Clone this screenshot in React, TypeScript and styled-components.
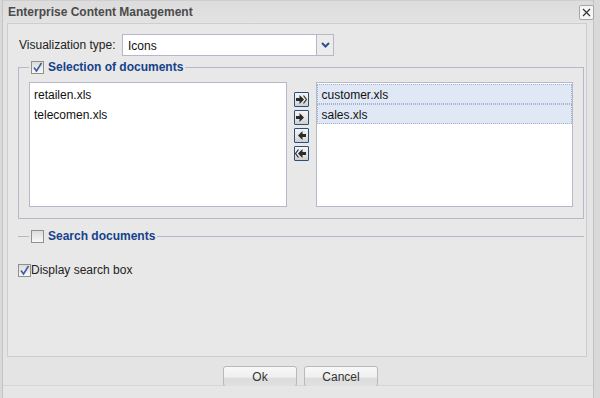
import styled, { createGlobalStyle } from "styled-components";

const GlobalStyle = createGlobalStyle`
  body {
    margin: 0;
    background: #d9d9d9;
    font-family: "Liberation Sans", Arial, sans-serif;
  }
`;

const Window = styled.div`
  width: 592px;
  height: 398px;
  margin-left: 2px;
  display: flex;
  flex-direction: column;
  background: #e4e4e4;
  border-left: 1px solid #c4c4c4;
  border-right: 1px solid #c4c4c4;
  box-sizing: border-box;
`;

const TitleBar = styled.div`
  height: 22px;
  display: flex;
  align-items: center;
  justify-content: space-between;
  padding: 0 0 0 5px;
  background: linear-gradient(#dcdcdc, #e2e2e2);
  border-top: 1px solid #cfcfcf;
  box-sizing: border-box;
`;

const Title = styled.div`
  font-size: 12px;
  font-weight: bold;
  color: #4b4b4b;
  padding-top: 1px;
`;

const CloseButton = styled.div`
  width: 13px;
  height: 13px;
  margin-top: 2px;
  margin-right: -1px;
  border: 1px solid #a6a6a6;
  border-radius: 2px;
  background: #f6f6f6;
  display: flex;
  align-items: center;
  justify-content: center;
`;

const Panel = styled.div`
  margin: 1px 6px 0 4px;
  height: 334px;
  box-sizing: border-box;
  border: 1px solid #cdcdcd;
  background: #e8e8e8;
  padding: 10px 3px 0 10px;
  display: flex;
  flex-direction: column;
`;

const FieldRow = styled.div`
  display: flex;
  align-items: center;
  margin-left: 1px;
  height: 22px;
`;

const Label = styled.div`
  font-size: 12px;
  color: #222;
  width: 103px;
  white-space: nowrap;
`;

const SelectBox = styled.div`
  display: flex;
  height: 22px;
  box-sizing: border-box;
  border: 1px solid #b5b8c8;
`;

const SelectValue = styled.div`
  width: 193px;
  background: #fff;
  font-size: 12px;
  color: #111;
  padding: 4px 0 0 5px;
  box-sizing: border-box;
`;

const SelectTrigger = styled.div`
  width: 16px;
  border-left: 1px solid #b5b8c8;
  background: #ececec;
  display: flex;
  align-items: center;
  justify-content: center;
`;

const FieldSet = styled.fieldset<{ $collapsed?: boolean }>`
  margin: 0;
  padding: ${(p) => (p.$collapsed ? "0" : "8px 10px 11px 10px")};
  border: 1px solid #b5b8c8;
  ${(p) =>
    p.$collapsed &&
    `
    border-left: none;
    border-right: none;
    border-bottom: none;
    `}
  min-width: 0;
  width: 566px;
  box-sizing: border-box;
`;

const Legend = styled.legend<{ $collapsed?: boolean }>`
  margin-left: ${(p) => (p.$collapsed ? "11px" : "0")};
  padding: 0 2px 0 2px;
  display: flex;
  align-items: center;
  gap: 4px;
  font-size: 12px;
  font-weight: bold;
  color: #15428b;
`;

const CheckBox = styled.span`
  width: 13px;
  height: 13px;
  box-sizing: border-box;
  border: 1px solid #8e8f8f;
  background: linear-gradient(#dcdcdc, #f8f8f8);
  display: inline-flex;
  align-items: center;
  justify-content: center;
  flex-shrink: 0;
`;

const ListsRow = styled.div`
  display: flex;
  align-items: flex-start;
`;

const ListBox = styled.div<{ $width: number }>`
  width: ${(p) => p.$width}px;
  height: 125px;
  box-sizing: border-box;
  background: #fff;
  border: 1px solid #b5b8c8;
  padding-top: 1px;
`;

const ListItem = styled.div<{ $selected?: boolean }>`
  height: 20px;
  box-sizing: border-box;
  font-size: 12px;
  color: #111;
  padding: 3px 0 0 3px;
  background: ${(p) => (p.$selected ? "#e0e8f6" : "transparent")};
  border: 1px dotted ${(p) => (p.$selected ? "#a3b1d1" : "transparent")};
`;

const ButtonColumn = styled.div`
  width: 16px;
  margin: 10px 7px 0 7px;
  display: flex;
  flex-direction: column;
  gap: 3px;
`;

const ArrowButton = styled.div`
  width: 15px;
  height: 15px;
  box-sizing: border-box;
  border: 1px solid #27507d;
  border-radius: 1px;
  background: linear-gradient(#f4f4f4 0%, #e6e6e6 55%, #cfcfcf 100%);
  display: flex;
  align-items: center;
  justify-content: center;
`;

const SearchSection = styled.div`
  margin-top: 10px;
`;

const CheckRow = styled.div`
  display: flex;
  align-items: center;
  margin-top: 20px;
  font-size: 12px;
  color: #222;
`;

const Footer = styled.div`
  flex: 1;
  display: flex;
  flex-direction: column;
`;

const ButtonBar = styled.div`
  height: 28px;
  display: flex;
  justify-content: center;
  align-items: flex-end;
  gap: 7px;
  padding-left: 5px;
  border-bottom: 1px solid #d6d6d6;
`;

const Button = styled.div`
  width: 74px;
  height: 21px;
  margin-bottom: -2px;
  box-sizing: border-box;
  border: 1px solid #b9b9b9;
  border-radius: 3px;
  background: linear-gradient(#f8f8f8 0%, #efefef 55%, #dcdcdc 56%, #e0e0e0 100%);
  font-size: 12px;
  color: #333;
  display: flex;
  align-items: center;
  justify-content: center;
`;

const BottomStrip = styled.div`
  flex: 1;
  background: #e6e6e6;
`;

const Check = () => (
  <svg width="11" height="11" viewBox="0 0 11 11">
    <path d="M2 5.5 L4.5 9 L9.5 1" fill="none" stroke="#3f5f9f" strokeWidth="1.6" />
  </svg>
);

const Arrow = ({ dir, double }: { dir: "right" | "left"; double?: boolean }) => (
  <svg width="12" height="11" viewBox="0 0 12 11" style={{ transform: dir === "left" ? "scaleX(-1)" : undefined }}>
    <path d="M1 4 H4.5 V1 L9 5.5 L4.5 10 V7 H1 Z" fill="#2b2b2b" />
    {double && <path d="M8.5 1.5 L11.5 5.5 L8.5 9.5" fill="none" stroke="#2b2b2b" strokeWidth="1.2" />}
  </svg>
);

export default function App() {
  return (
    <>
      <GlobalStyle />
      <Window>
        <TitleBar>
          <Title>Enterprise Content Management</Title>
          <CloseButton>
            <svg width="9" height="9" viewBox="0 0 9 9">
              <path d="M1 1 L8 8 M8 1 L1 8" stroke="#333" strokeWidth="1.2" />
            </svg>
          </CloseButton>
        </TitleBar>
        <Panel>
          <FieldRow>
            <Label>Visualization type:</Label>
            <SelectBox>
              <SelectValue>Icons</SelectValue>
              <SelectTrigger>
                <svg width="9" height="6" viewBox="0 0 9 6">
                  <path d="M1 1 L4.5 4.5 L8 1" fill="none" stroke="#2d4f8a" strokeWidth="2" />
                </svg>
              </SelectTrigger>
            </SelectBox>
          </FieldRow>
          <FieldSet style={{ marginTop: 4 }}>
            <Legend>
              <CheckBox>
                <Check />
              </CheckBox>
              Selection of documents
            </Legend>
            <ListsRow>
              <ListBox $width={258}>
                <ListItem>retailen.xls</ListItem>
                <ListItem>telecomen.xls</ListItem>
              </ListBox>
              <ButtonColumn>
                <ArrowButton>
                  <Arrow dir="right" double />
                </ArrowButton>
                <ArrowButton>
                  <Arrow dir="right" />
                </ArrowButton>
                <ArrowButton>
                  <Arrow dir="left" />
                </ArrowButton>
                <ArrowButton>
                  <Arrow dir="left" double />
                </ArrowButton>
              </ButtonColumn>
              <ListBox $width={257}>
                <ListItem $selected>customer.xls</ListItem>
                <ListItem $selected>sales.xls</ListItem>
              </ListBox>
            </ListsRow>
          </FieldSet>
          <SearchSection>
            <FieldSet $collapsed>
              <Legend $collapsed>
                <CheckBox />
                Search documents
              </Legend>
            </FieldSet>
          </SearchSection>
          <CheckRow>
            <CheckBox>
              <Check />
            </CheckBox>
            Display search box
          </CheckRow>
        </Panel>
        <Footer>
          <ButtonBar>
            <Button>Ok</Button>
            <Button>Cancel</Button>
          </ButtonBar>
          <BottomStrip />
        </Footer>
      </Window>
    </>
  );
}
